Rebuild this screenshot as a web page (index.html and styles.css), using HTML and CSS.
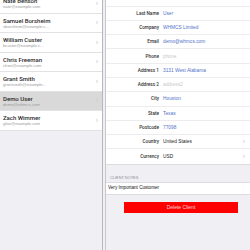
FILE: index.html
```html
<!DOCTYPE html>
<html lang="en">
<head>
    <meta charset="UTF-8">
    <meta name="viewport" content="width=device-width, initial-scale=1.0">
    <title>Clients</title>
    <link rel="stylesheet" href="styles.css">
</head>
<body>
    <div class="split">
        <div class="client-list">
            <ul class="clients">
                <li class="client-row">
                    <div class="client-info">
                        <div class="client-name">Nate Benson</div>
                        <div class="client-email">nate@example.com</div>
                    </div>
                    <span class="chevron">›</span>
                </li>
                <li class="client-row">
                    <div class="client-info">
                        <div class="client-name">Samuel Borsheim</div>
                        <div class="client-email">sborsheim@example.c...</div>
                    </div>
                    <span class="chevron">›</span>
                </li>
                <li class="client-row">
                    <div class="client-info">
                        <div class="client-name">William Custer</div>
                        <div class="client-email">bcuster@example.c...</div>
                    </div>
                    <span class="chevron">›</span>
                </li>
                <li class="client-row">
                    <div class="client-info">
                        <div class="client-name">Chris Freeman</div>
                        <div class="client-email">cfree@example.com</div>
                    </div>
                    <span class="chevron">›</span>
                </li>
                <li class="client-row">
                    <div class="client-info">
                        <div class="client-name">Grant Smith</div>
                        <div class="client-email">grantsmith@example...</div>
                    </div>
                    <span class="chevron">›</span>
                </li>
                <li class="client-row selected">
                    <div class="client-info">
                        <div class="client-name">Demo User</div>
                        <div class="client-email">demo@whmcs.com</div>
                    </div>
                    <span class="chevron">›</span>
                </li>
                <li class="client-row">
                    <div class="client-info">
                        <div class="client-name">Zach Wimmer</div>
                        <div class="client-email">gfox@example.com</div>
                    </div>
                    <span class="chevron">›</span>
                </li>
            </ul>
        </div>

        <div class="client-detail">
            <div class="field-group">
                <div class="field"><span class="field-label">First Name</span><span class="field-value">Demo</span></div>
                <div class="field"><span class="field-label">Last Name</span><span class="field-value">User</span></div>
                <div class="field"><span class="field-label">Company</span><span class="field-value">WHMCS Limited</span></div>
                <div class="field"><span class="field-label">Email</span><span class="field-value">demo@whmcs.com</span></div>
                <div class="field"><span class="field-label">Phone</span><span class="field-value placeholder">phone</span></div>
                <div class="field"><span class="field-label">Address 1</span><span class="field-value">3131 West Alabama</span></div>
                <div class="field"><span class="field-label">Address 2</span><span class="field-value placeholder">address2</span></div>
                <div class="field"><span class="field-label">City</span><span class="field-value">Houston</span></div>
                <div class="field"><span class="field-label">State</span><span class="field-value">Texas</span></div>
                <div class="field"><span class="field-label">Postcode</span><span class="field-value">77098</span></div>
                <div class="field"><span class="field-label">Country</span><span class="field-value select">United States</span><span class="chevron">›</span></div>
                <div class="field"><span class="field-label">Currency</span><span class="field-value select">USD</span><span class="chevron">›</span></div>
            </div>

            <div class="section-header">CLIENT NOTES</div>
            <div class="notes">Very Important Customer</div>

            <div class="actions">
                <button class="delete-btn">Delete Client</button>
            </div>
        </div>
    </div>
</body>
</html>
```

FILE: styles.css
```css
* {
    margin: 0;
    padding: 0;
    box-sizing: border-box;
}

body {
    font-family: 'Liberation Sans', Arial, sans-serif;
    background: #efeff4;
    width: 250px;
    height: 250px;
    overflow: hidden;
}

.split {
    display: flex;
    height: 250px;
}

/* left list */
.client-list {
    width: 103px;
    border-right: 1px solid #b8b8bc;
    background: #efeff4;
}

.clients {
    list-style: none;
    margin-top: -6px;
    background: white;
}

.client-row {
    display: flex;
    align-items: center;
    height: 19.5px;
    padding: 0 4px 0 3px;
    border-bottom: 1px solid #e2e2e6;
}

.client-row.selected {
    background: #d9d9d9;
}

.client-info {
    flex: 1;
    min-width: 0;
}

.client-name {
    font-family: Roboto, 'Liberation Sans', sans-serif;
    font-size: 6px;
    font-weight: 500;
    color: #2a2a2a;
    line-height: 7px;
}

.client-email {
    font-size: 4.2px;
    color: #9a9a9a;
    line-height: 5px;
}

.chevron {
    color: #c7c7cc;
    font-size: 7px;
    line-height: 7px;
}

/* right detail */
.client-detail {
    flex: 1;
    margin-left: 2px;
    border-left: 1px solid #c8c7cc;
}

.field-group {
    margin-top: -7.8px;
    background: white;
    border-bottom: 1px solid #dcdce0;
}

.field {
    display: flex;
    align-items: center;
    height: 14.3px;
    padding-right: 5px;
    border-bottom: 1px solid #ececef;
}

.field:last-child {
    border-bottom: none;
}

.field-label {
    width: 53px;
    text-align: right;
    font-family: Roboto, 'Liberation Sans', sans-serif;
    font-size: 4.7px;
    font-weight: 500;
    color: #333;
}

.field-value {
    flex: 1;
    margin-left: 4px;
    font-size: 4.8px;
    color: #5273c8;
}

.field-value.placeholder {
    color: #c8c8cc;
}

.field-value.select {
    color: #222;
}

.section-header {
    margin-top: 10px;
    padding: 0 0 2px 4px;
    font-size: 3.9px;
    color: #8e8e93;
}

.notes {
    height: 13px;
    padding: 2px 0 0 2px;
    background: white;
    border-top: 1px solid #dcdce0;
    border-bottom: 1px solid #dcdce0;
    font-size: 4.6px;
    color: #111;
}

.actions {
    display: flex;
    justify-content: center;
    padding-top: 7px;
}

.delete-btn {
    width: 114px;
    height: 11px;
    margin-left: 6px;
    border: none;
    background: #ff0000;
    color: #ffd6d6;
    font-family: 'Liberation Sans', Arial, sans-serif;
    font-size: 5px;
}
```
